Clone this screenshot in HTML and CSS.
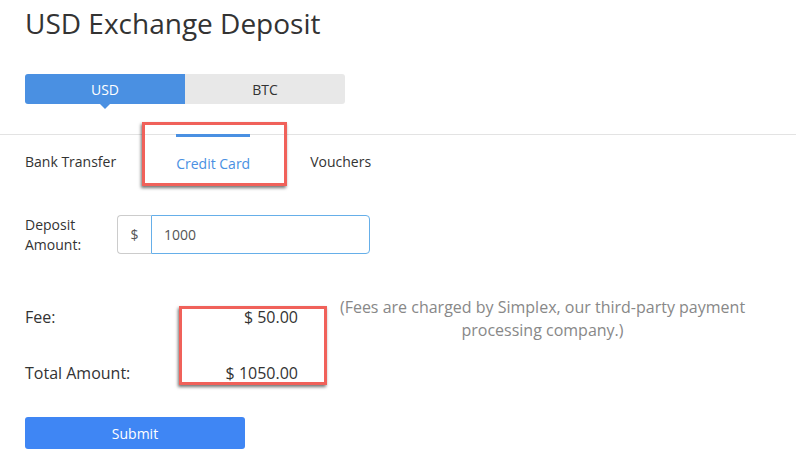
FILE: index.html
```html
<!DOCTYPE html>
<html lang="en">
<head>
<meta charset="utf-8">
<title>USD Exchange Deposit</title>
<link rel="stylesheet" href="styles.css">
</head>
<body>
<div class="page">
  <h1 class="title">USD Exchange Deposit</h1>
  <div class="toggle">
    <button class="seg seg-active">USD</button>
    <button class="seg">BTC</button>
  </div>
</div>
<nav class="tabs">
  <span class="tab">Bank Transfer</span>
  <span class="tab tab-active">Credit Card<span class="annot annot-tab"></span></span>
  <span class="tab">Vouchers</span>
</nav>
<div class="page">
  <div class="field">
    <label class="field-label" for="amount">Deposit Amount:</label>
    <div class="input-group">
      <span class="addon">$</span>
      <input id="amount" class="amount" type="text" value="1000">
    </div>
  </div>
  <div class="fees">
    <div class="fee-labels">
      <div class="fee-row">Fee:</div>
      <div class="fee-row">Total Amount:</div>
    </div>
    <div class="fee-values">
      <div class="fee-row">$ 50.00</div>
      <div class="fee-row">$ 1050.00</div>
      <span class="annot annot-fee"></span>
    </div>
    <p class="fee-note">(Fees are charged by Simplex, our third-party payment processing company.)</p>
  </div>
  <button class="submit">Submit</button>
</div>
</body>
</html>
```
FILE: styles.css
```css
* { box-sizing: border-box; }
html, body { margin: 0; padding: 0; background: #fff; }
body {
  font-family: "Open Sans", "Noto Sans", sans-serif;
  color: #333;
  font-size: 14px;
  line-height: 20px;
}
.page { padding: 0 25px; }
.title {
  margin: 4px 0 0;
  font-size: 28px;
  line-height: 38px;
  font-weight: 400;
  color: #333;
}
.toggle {
  display: flex;
  width: 320px;
  height: 30px;
  margin-top: 32px;
}
.seg {
  flex: 1;
  border: 0;
  margin: 0;
  padding: 0;
  font-family: inherit;
  font-size: 14px;
  color: #333;
  background: #e8e8e8;
  border-radius: 0 3px 3px 0;
  cursor: pointer;
}
.seg-active {
  position: relative;
  background: #4a90e2;
  color: #fff;
  border-radius: 3px 0 0 3px;
}
.seg-active::after {
  content: "";
  position: absolute;
  left: 50%;
  bottom: -5px;
  margin-left: -5px;
  border-left: 5px solid transparent;
  border-right: 5px solid transparent;
  border-top: 5px solid #4a90e2;
}
.tabs {
  display: flex;
  gap: 60px;
  margin-top: 30px;
  padding-left: 25px;
  border-top: 1px solid #e3e3e3;
}
.tab {
  padding-top: 17px;
  line-height: 20px;
  color: #333;
}
.tab-active {
  position: relative;
  margin-top: -1px;
  border-top: 3px solid #4a90e2;
  color: #4a90e2;
}
.annot {
  position: absolute;
  border: 3px solid #f0615a;
  box-shadow: -1px 2px 3px rgba(0, 0, 0, 0.55);
  pointer-events: none;
}
.annot-tab {
  left: -34px;
  top: -15px;
  width: 145px;
  height: 64px;
}
.field {
  display: flex;
  align-items: flex-start;
  gap: 12px;
  margin-top: 41px;
}
.field-label {
  width: 80px;
  line-height: 20px;
  color: #333;
}
.input-group {
  display: flex;
  height: 39px;
}
.addon {
  width: 34px;
  display: flex;
  align-items: center;
  justify-content: center;
  border: 1px solid #cccccc;
  border-right: 0;
  border-radius: 4px 0 0 4px;
  color: #555;
}
.amount {
  width: 219px;
  height: 39px;
  margin: 0;
  padding: 0 12px;
  border: 1px solid #66afe9;
  border-radius: 0 4px 4px 0;
  font-family: inherit;
  font-size: 14px;
  color: #555;
  outline: none;
}
.fees {
  display: flex;
  align-items: flex-start;
  margin-top: 41px;
  font-size: 16px;
  line-height: 23px;
}
.fee-labels, .fee-values {
  display: flex;
  flex-direction: column;
  gap: 33px;
  padding-top: 10px;
}
.fee-labels { width: 155px; }
.fee-values {
  position: relative;
  width: 118px;
  text-align: right;
}
.annot-fee {
  left: -1px;
  top: 10px;
  width: 148px;
  height: 79px;
}
.fee-note {
  width: 425px;
  margin: 0 0 0 32px;
  text-align: center;
  color: #888;
}
.submit {
  display: block;
  width: 220px;
  height: 32px;
  margin-top: 32px;
  border: 0;
  border-radius: 3px;
  background: #3f86f4;
  color: #fff;
  font-family: inherit;
  font-size: 14px;
  cursor: pointer;
}
```
